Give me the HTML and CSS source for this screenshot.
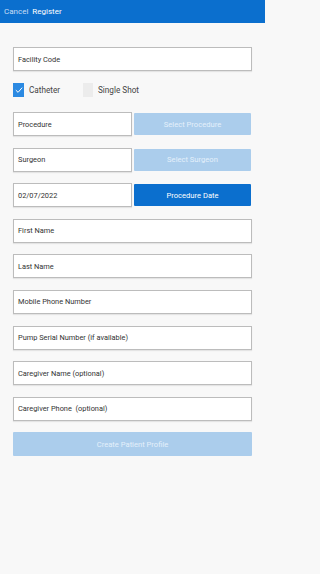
FILE: index.html
```html
<!DOCTYPE html>
<html>
<head>
<meta charset="utf-8">
<link rel="stylesheet" href="styles.css">
</head>
<body>
<header class="topbar">
  <span class="cancel">Cancel</span>
  <span class="title">Register</span>
</header>
<main class="form">
  <div class="field">Facility Code</div>
  <div class="checks">
    <label class="check">
      <span class="box on"><svg viewBox="0 0 12 12" width="10" height="10"><path d="M2.2 6.2 L4.9 8.8 L9.8 3.2" fill="none" stroke="#fff" stroke-width="1.2"/></svg></span>
      <span>Catheter</span>
    </label>
    <label class="check">
      <span class="box off"></span>
      <span>Single Shot</span>
    </label>
  </div>
  <div class="stack">
    <div class="pair">
      <div class="field half">Procedure</div>
      <div class="btn light">Select Procedure</div>
    </div>
    <div class="pair">
      <div class="field half">Surgeon</div>
      <div class="btn light">Select Surgeon</div>
    </div>
    <div class="pair">
      <div class="field half">02/07/2022</div>
      <div class="btn dark">Procedure Date</div>
    </div>
    <div class="field">First Name</div>
    <div class="field">Last Name</div>
    <div class="field">Mobile Phone Number</div>
    <div class="field">Pump Serial Number (if available)</div>
    <div class="field">Caregiver Name (optional)</div>
    <div class="field">Caregiver Phone&nbsp; (optional)</div>
    <div class="btn light wide">Create Patient Profile</div>
  </div>
</main>
</body>
</html>
```

FILE: styles.css
```css
* { box-sizing: border-box; }
html, body { margin: 0; padding: 0; background: #f8f8f8; }
body {
  font-family: Roboto, "Liberation Sans", sans-serif;
  width: 265px;
  height: 574px;
  overflow: hidden;
}
.topbar {
  height: 23px;
  background: #0b6fce;
  display: flex;
  align-items: center;
  padding-left: 4px;
  gap: 4px;
  font-size: 8px;
}
.cancel { color: #c9def4; }
.title { color: #fff; }
.form {
  padding: 24px 13px 0 13px;
}
.field {
  height: 24px;
  background: #fff;
  border: 1px solid #bcbcbc;
  box-shadow: 0 1px 1px rgba(0,0,0,0.08);
  display: flex;
  align-items: center;
  padding-left: 4px;
  font-size: 7.4px;
  color: #333;
  width: 239px;
}
.checks {
  display: flex;
  height: 14px;
  margin: 12px 0 15px 0;
  align-items: center;
}
.check {
  display: flex;
  align-items: center;
  gap: 5px;
  font-size: 8.2px;
  color: #444;
  width: 70px;
}
.box {
  width: 11px;
  height: 14px;
  display: flex;
  align-items: center;
  justify-content: center;
}
.box.on { background: #2c8ae2; }
.box.off { background: #ececec; width: 10px; }
.stack {
  display: flex;
  flex-direction: column;
  gap: 11.6px;
}
.pair {
  display: flex;
  align-items: center;
  gap: 2px;
  height: 24px;
}
.field.half { width: 119px; }
.btn {
  height: 22px;
  width: 117px;
  display: flex;
  align-items: center;
  justify-content: center;
  color: #fff;
  font-size: 7.6px;
  border-radius: 1px;
}
.btn.light { background: #abcdec; color: #e4f0fb; }
.btn.dark { background: #0b6fce; color: #fff; }
.btn.wide {
  width: 239px;
  height: 24px;
}
```
